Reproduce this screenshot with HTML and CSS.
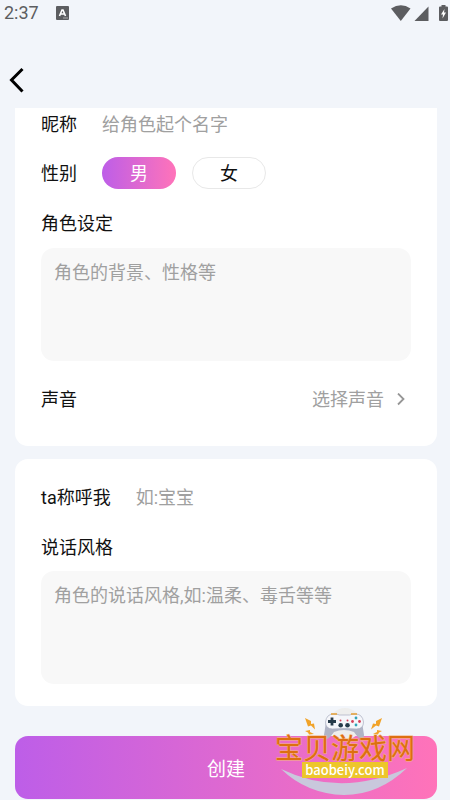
FILE: index.html
```html
<!DOCTYPE html>
<html lang="zh-CN">
<head>
<meta charset="utf-8">
<meta name="viewport" content="width=device-width, initial-scale=1">
<title>创建角色</title>
<link rel="stylesheet" href="styles.css">
</head>
<body>
<div class="screen">
  <header class="status">
    <span class="time">2:37</span>
    <svg class="app-badge" width="13" height="14" viewBox="0 0 13 14" aria-hidden="true"><rect width="13" height="14" rx="1" fill="#5c5d60"/><path d="M3.500 10 6 4h1L9.500 10M4.500 8h4" fill="none" stroke="#fff" stroke-width="1.600"/><path d="M7 12h5" stroke="#aaa"/></svg>
    <svg class="signals" width="60" height="18" viewBox="0 0 60 18" aria-hidden="true" fill="#5c5d60"><path d="M1 4.500Q11 -2 20.500 4.500L10.800 17Z"/><path d="M38.500 2.500V17H24.500Z"/><path d="M51.500 1h4v1.500H57q1 0 1 1V16q0 1-1 1h-7q-1 0-1-1V3.500q0-1 1-1h1.500Z"/><path d="M54.500 5 51 10.500h2l-.5 4 3.500-6h-2Z" fill="#fff"/></svg>
  </header>
  <nav class="topbar">
    <button class="back" type="button" aria-label="返回"><svg width="16" height="26" viewBox="0 0 16 26" aria-hidden="true"><path d="M14.500 2 3.500 13 14.500 24.500" fill="none" stroke="#000" stroke-width="3"/></svg></button>
  </nav>
  <form class="form">
    <section class="card card-profile">
      <div class="row"><label class="label" for="name">昵称</label><input class="field" id="name" type="text" placeholder="给角色起个名字"></div>
      <fieldset class="row gender">
        <legend class="sr-only">性别</legend>
        <span class="label" aria-hidden="true">性别</span>
        <div class="options">
          <label class="pill"><input class="sr-only" type="radio" name="gender" checked><span>男</span></label>
          <label class="pill"><input class="sr-only" type="radio" name="gender"><span>女</span></label>
        </div>
      </fieldset>
      <div class="block"><label class="label" for="persona">角色设定</label><textarea class="area" id="persona" placeholder="角色的背景、性格等"></textarea></div>
      <div class="row voice"><span class="label">声音</span><button class="choose" type="button">选择声音<svg width="10" height="14" viewBox="0 0 10 14" aria-hidden="true"><path d="M2 .5 7.500 6 2 11.500" fill="none" stroke="#969696" stroke-width="1.800"/></svg></button></div>
    </section>
    <section class="card card-style">
      <div class="row"><label class="label" for="call">ta称呼我</label><input class="field" id="call" type="text" placeholder="如:宝宝"></div>
      <div class="block"><label class="label" for="style">说话风格</label><textarea class="area" id="style" placeholder="角色的说话风格,如:温柔、毒舌等等"></textarea></div>
    </section>
    <div class="submit">
      <button class="create" type="submit">创建</button>
      <div class="mark">
        <svg class="mark-art" width="140" height="88" viewBox="0 0 140 88" aria-hidden="true">
          <circle cx="70" cy="16" r="16" fill="#eeeeed"/>
          <path d="M6 61Q66 90 132 60Q104 87 69 87Q32 86 6 61Z" fill="#c9c8dc"/>
          <path d="M51 14 49 27q0 5 3 4 3-1 7-7 10-4 20 0 4 6 7 7 3 1 3-4L87 14Z" fill="#b0b4c6"/>
          <path d="M50.500 14q1-8 8-8 4 0 6 1h10q2-1 6-1 7 0 8 8 0 7-7 7-12-1-24 0-7 0-7-7Z" fill="#f5f6fa" stroke="#a9adc0" stroke-width=".7"/>
          <path d="M56 6h6M76 6h6" stroke="#e6a137" stroke-width="1.500"/>
          <path d="M57 9.500v8M53 13.500h8" stroke="#263b4a" stroke-width="2.800"/>
          <g fill="#263b4a"><circle cx="65.700" cy="17.300" r="2.300"/><circle cx="72.500" cy="17.300" r="2.300"/></g>
          <g fill="#d54058"><circle cx="77.500" cy="13.500" r="1.400"/><circle cx="84.500" cy="13.500" r="1.400"/><circle cx="65.500" cy="12.500" r="1"/><circle cx="72.500" cy="12.500" r="1"/></g>
          <g fill="#31a4b8"><circle cx="81" cy="10" r="1.400"/><circle cx="81" cy="17" r="1.400"/></g>
          <g fill="#f1a329"><path d="M30 10l6 3 0 3 3-.5 1 6-4-4-3 1Z"/><path d="M30 23l5-1 0 2 4 2-5 .5-1-2Z"/><path d="M107 10l-6 3 0 3-3-.5-2 6 5-4 3 1Z"/><path d="M107 23l-5-1 0 2-4 2 5 .5 1-2Z"/></g>
        </svg>
        <span class="mark-name">宝贝游戏网</span>
        <span class="mark-url">baobeiy.com</span>
      </div>
    </div>
  </form>
</div>
</body>
</html>
```
FILE: styles.css
```css
* { box-sizing: border-box; }
body {
  margin: 0;
  background: #f2f5fa;
  color: #111;
  font: 18px/34px "Roboto", "Noto Sans CJK SC", sans-serif;
}
button, input, textarea { font: inherit; color: inherit; }
button { border: 0; padding: 0; background: none; cursor: pointer; }
.sr-only {
  position: absolute;
  width: 1px;
  height: 1px;
  margin: 0;
  overflow: hidden;
  opacity: 0;
}
.screen { padding: 0 13px 0 15px; }
.status {
  display: flex;
  align-items: center;
  height: 26px;
  margin: 0 -13px 0 -11px;
  color: #5c5d60;
}
.app-badge { margin-left: 17px; }
.signals { margin-left: auto; }
.topbar { height: 82px; padding-top: 41px; margin-left: -7px; }
.back { display: block; height: 26px; }
.back svg { display: block; }
.card { padding: 0 26px; background: #fff; border-radius: 13px; }
.card-profile { padding-bottom: 29px; border-radius: 0 0 13px 13px; }
.card-style { margin-top: 13px; padding-top: 22px; padding-bottom: 22px; }
.row { display: flex; align-items: center; gap: 25px; }
.label { flex: none; }
.field {
  flex: 1;
  min-width: 0;
  height: 34px;
  padding: 0;
  border: 0;
  background: none;
}
::placeholder { color: #a0a0a0; opacity: 1; }
.gender { margin: 15px 0 16px; padding: 0; border: 0; }
.options { display: flex; align-self: flex-start; gap: 16px; }
.pill span {
  display: block;
  width: 74px;
  height: 32px;
  border: 1px solid #e8e8e8;
  border-radius: 16px;
  line-height: 32px;
  text-align: center;
}
.pill input:checked + span {
  border: 0;
  line-height: 34px;
  color: #fff;
  background: linear-gradient(90deg, #bd5ee8, #ff73b9);
}
.block { display: flex; flex-direction: column; gap: 7px; }
.card-style .block { margin-top: 16px; gap: 6px; }
.area {
  display: block;
  width: 100%;
  height: 113px;
  padding: 8px 13px;
  border: 0;
  border-radius: 13px;
  background: #f8f8f8;
  resize: none;
}
.voice { justify-content: space-between; margin-top: 22px; }
.choose {
  display: flex;
  align-items: center;
  gap: 12px;
  padding-right: 5px;
  color: #a0a0a0;
}
.submit { position: relative; padding: 30px 0 1px; }
.create {
  display: block;
  width: 100%;
  height: 63px;
  padding-top: 5px;
  border-radius: 13px;
  color: #fff;
  font-size: 19px;
  background: linear-gradient(90deg, #bd5ee8, #ff73b9);
}
.mark {
  position: absolute;
  top: 2px;
  right: 22px;
  width: 140px;
  display: flex;
  flex-direction: column;
  align-items: center;
  gap: 2px;
  padding-top: 26px;
  pointer-events: none;
}
.mark-art { position: absolute; top: 0; left: 0; }
.mark-name {
  position: relative;
  color: #dd6f10;
  font-size: 28px;
  font-weight: 400;
  line-height: 26px;
  font-family: "Noto Sans CJK SC", sans-serif;
  white-space: nowrap;
  -webkit-text-stroke: 1px #f5b47c;
  paint-order: stroke fill;
}
.mark-url {
  position: relative;
  padding: 0 3px;
  background: #edc62b;
  color: #fff;
  font: 500 13px/16px "Noto Sans CJK SC", sans-serif;
}
```
